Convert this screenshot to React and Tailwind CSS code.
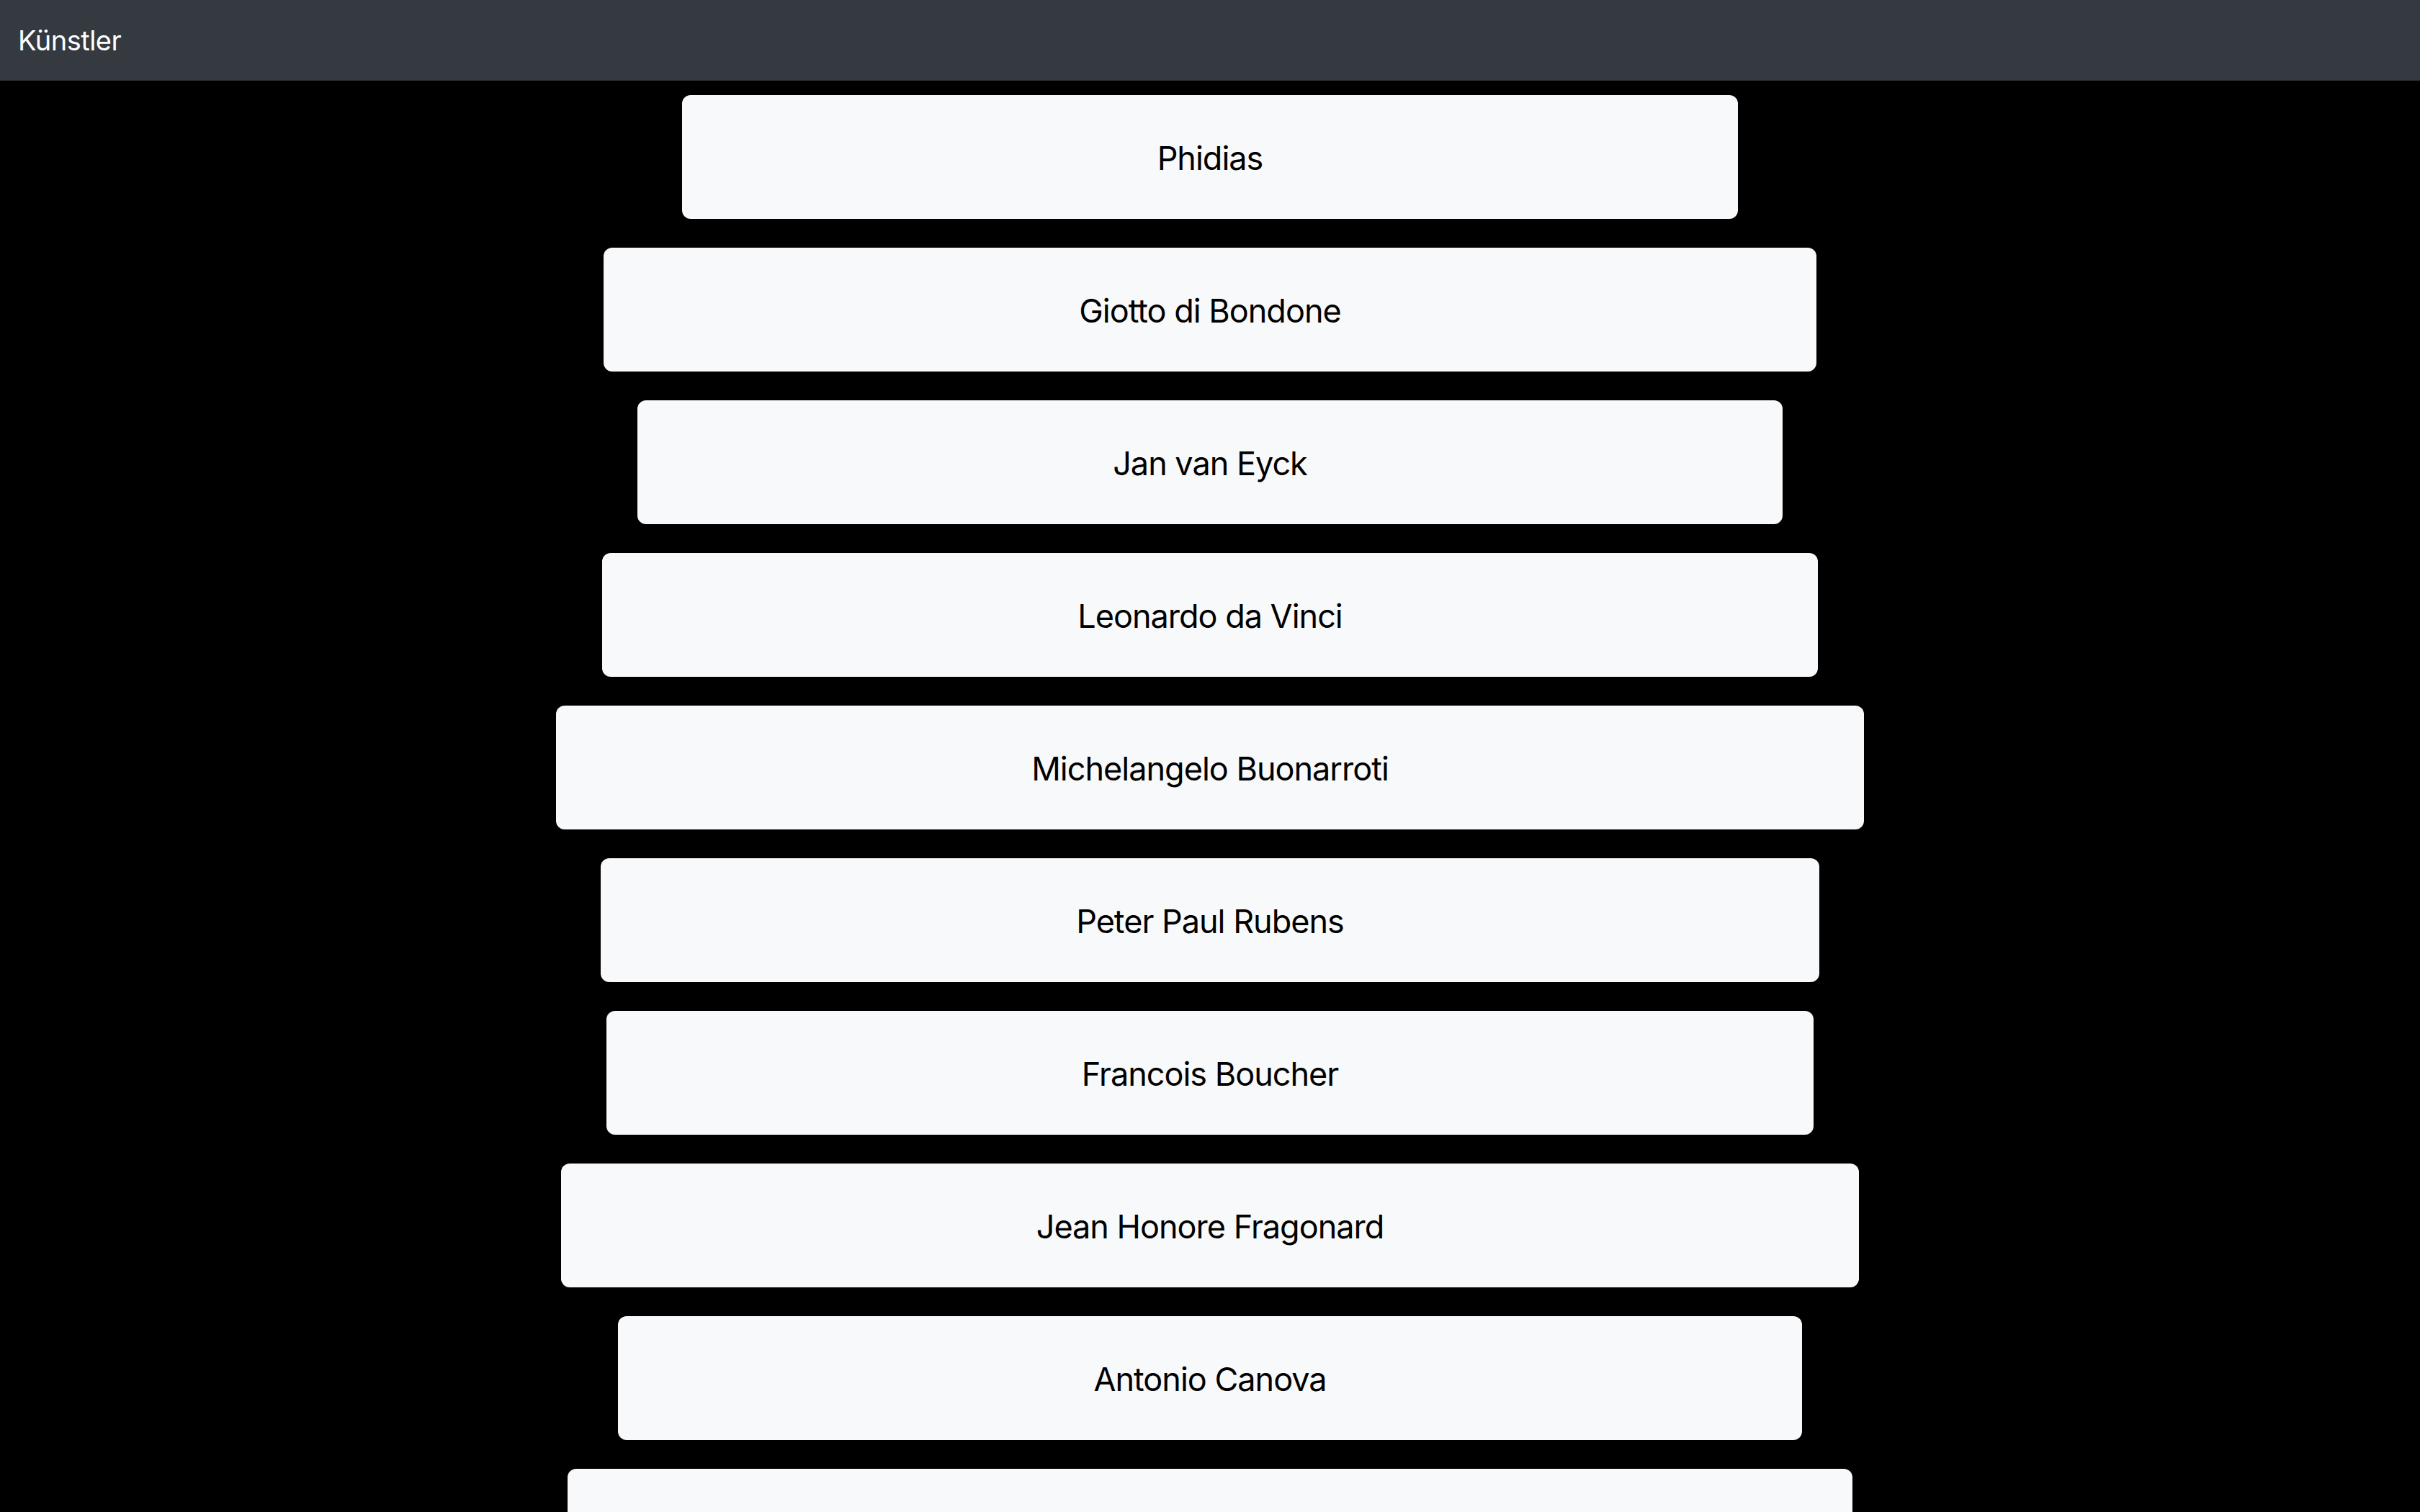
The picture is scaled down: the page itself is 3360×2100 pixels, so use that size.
const artists = [
  'Phidias',
  'Giotto di Bondone',
  'Jan van Eyck',
  'Leonardo da Vinci',
  'Michelangelo Buonarroti',
  'Peter Paul Rubens',
  'Francois Boucher',
  'Jean Honore Fragonard',
  'Antonio Canova',
  'Caspar David Friedrich',
]

const App = () => {
  return (
    <div className="h-screen overflow-hidden bg-black font-['Inter','Noto_Sans',sans-serif]">
      <nav className="h-[112px] bg-[#343a40] flex items-center px-[25px]">
        <span className="text-white text-[38px] tracking-[-0.5px] leading-none">Künstler</span>
      </nav>

      <ul className="flex flex-col items-center gap-[40px] pt-[20px]">
        {artists.map((name) => (
          <li
            key={name}
            className="h-[172px] px-[660px] pt-[4px] flex items-center justify-center bg-[#f8f9fa] rounded-[12px] text-black text-[45px] tracking-[-1px] whitespace-nowrap"
          >
            {name}
          </li>
        ))}
      </ul>
    </div>
  )
}

export default App
